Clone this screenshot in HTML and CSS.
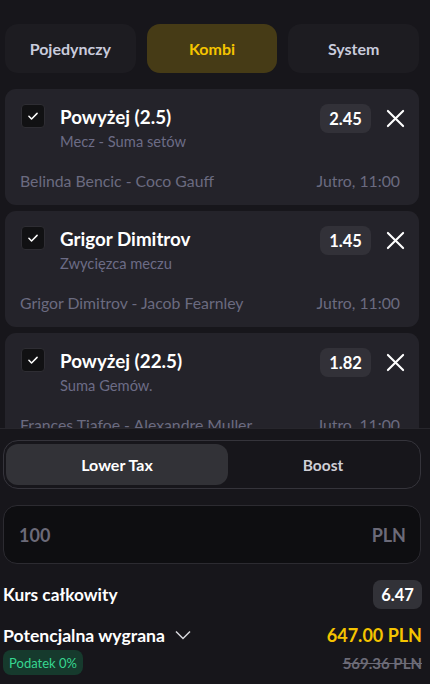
FILE: index.html
```html
<!DOCTYPE html>
<html lang="pl">
<head>
<meta charset="utf-8">
<link rel="stylesheet" href="styles.css">
</head>
<body>
<div class="app">
  <div class="tabs">
    <div class="tab">Pojedynczy</div>
    <div class="tab active">Kombi</div>
    <div class="tab">System</div>
  </div>

  <div class="slips">
    <div class="card">
      <div class="top">
        <div class="check"><svg viewBox="0 0 24 24" width="14" height="14"><path d="M5 12.5l4.5 4.5L19 7.5" fill="none" stroke="#fff" stroke-width="2.6" stroke-linecap="round" stroke-linejoin="round"/></svg></div>
        <div class="info">
          <div class="title">Powyżej (2.5)</div>
          <div class="sub">Mecz - Suma setów</div>
        </div>
        <div class="odds">2.45</div>
        <div class="close"><svg viewBox="0 0 20 20" width="19" height="19"><path d="M2 2L18 18M18 2L2 18" stroke="#fff" stroke-width="2.2" stroke-linecap="round"/></svg></div>
      </div>
      <div class="foot"><span>Belinda Bencic - Coco Gauff</span><span>Jutro, 11:00</span></div>
    </div>

    <div class="card">
      <div class="top">
        <div class="check"><svg viewBox="0 0 24 24" width="14" height="14"><path d="M5 12.5l4.5 4.5L19 7.5" fill="none" stroke="#fff" stroke-width="2.6" stroke-linecap="round" stroke-linejoin="round"/></svg></div>
        <div class="info">
          <div class="title">Grigor Dimitrov</div>
          <div class="sub">Zwycięzca meczu</div>
        </div>
        <div class="odds">1.45</div>
        <div class="close"><svg viewBox="0 0 20 20" width="19" height="19"><path d="M2 2L18 18M18 2L2 18" stroke="#fff" stroke-width="2.2" stroke-linecap="round"/></svg></div>
      </div>
      <div class="foot"><span>Grigor Dimitrov - Jacob Fearnley</span><span>Jutro, 11:00</span></div>
    </div>

    <div class="card">
      <div class="top">
        <div class="check"><svg viewBox="0 0 24 24" width="14" height="14"><path d="M5 12.5l4.5 4.5L19 7.5" fill="none" stroke="#fff" stroke-width="2.6" stroke-linecap="round" stroke-linejoin="round"/></svg></div>
        <div class="info">
          <div class="title">Powyżej (22.5)</div>
          <div class="sub">Suma Gemów.</div>
        </div>
        <div class="odds">1.82</div>
        <div class="close"><svg viewBox="0 0 20 20" width="19" height="19"><path d="M2 2L18 18M18 2L2 18" stroke="#fff" stroke-width="2.2" stroke-linecap="round"/></svg></div>
      </div>
      <div class="foot"><span>Frances Tiafoe - Alexandre Muller</span><span>Jutro, 11:00</span></div>
    </div>
  </div>

  <div class="panel">
    <div class="toggle">
      <div class="seg active">Lower Tax</div>
      <div class="seg">Boost</div>
    </div>
    <div class="stake">
      <span class="amount">100</span>
      <span class="cur">PLN</span>
    </div>
    <div class="row total">
      <span class="label">Kurs całkowity</span>
      <span class="badge">6.47</span>
    </div>
    <div class="row win">
      <span class="label">Potencjalna wygrana <svg class="chev" viewBox="0 0 16 10" width="16" height="10"><path d="M1 1.5l7 7 7-7" fill="none" stroke="#d8d8de" stroke-width="1.5"/></svg></span>
      <span class="prize">647.00 PLN</span>
    </div>
    <div class="row tax">
      <span class="tag">Podatek 0%</span>
      <span class="old">569.36 PLN</span>
    </div>
  </div>
</div>
</body>
</html>
```

FILE: styles.css
```css
* { box-sizing: border-box; }
html, body { margin: 0; padding: 0; }
body {
  background: #17161b;
  font-family: Lato, "Noto Sans", sans-serif;
  color: #fff;
}
.app {
  width: 430px;
  height: 684px;
  display: flex;
  flex-direction: column;
  overflow: hidden;
}
.tabs {
  display: grid;
  grid-template-columns: 1fr 1fr 1fr;
  gap: 11px;
  padding: 24px 11px 0 5px;
}
.tab {
  height: 49px;
  border-radius: 13px;
  background: #1d1c21;
  color: #c9cbdc;
  font-weight: 700;
  font-size: 16px;
  display: flex;
  align-items: center;
  justify-content: center;
}
.tab.active {
  background: #463b16;
  color: #f5c400;
}
.slips {
  margin-top: 16px;
  height: 339px;
  overflow: hidden;
  padding: 0 11px 0 5px;
  display: flex;
  flex-direction: column;
  gap: 6px;
  flex-shrink: 0;
}
.card {
  flex-shrink: 0;
  height: 116px;
  background: #24232a;
  border-radius: 11px;
  padding: 15px 15px 14px 15px;
  display: flex;
  flex-direction: column;
}
.top {
  display: flex;
  align-items: flex-start;
}
.check {
  width: 24px;
  height: 24px;
  margin-left: 1px;
  border-radius: 4px;
  background: #111113;
  border: 1px solid #2e2d33;
  display: flex;
  align-items: center;
  justify-content: center;
  flex-shrink: 0;
}
.info {
  flex: 1;
  margin-left: 15px;
  margin-top: 2px;
}
.title {
  font-size: 18.8px;
  line-height: 22px;
  font-weight: 700;
  color: #fff;
}
.sub {
  margin-top: 3px;
  font-size: 14.7px;
  line-height: 20px;
  color: #6c6c86;
}
.odds {
  height: 29px;
  min-width: 51px;
  padding: 0 8px;
  border-radius: 8px;
  background: #323138;
  font-size: 16.5px;
  font-weight: 700;
  display: flex;
  align-items: center;
  justify-content: center;
}
.close {
  width: 24px;
  height: 29px;
  margin-left: 12px;
  margin-right: -3px;
  display: flex;
  align-items: center;
  justify-content: center;
}
.foot {
  margin-top: auto;
  display: flex;
  justify-content: space-between;
  padding-right: 4px;
  font-size: 15.8px;
  line-height: 20px;
  color: #6b6b80;
}
.panel {
  flex: 1;
  border-top: 1px solid #27262c;
  background: #17161b;
  padding: 11px 9px 0 3px;
  display: flex;
  flex-direction: column;
}
.toggle {
  height: 49px;
  border: 1px solid #35343b;
  border-radius: 15px;
  padding: 3px 2px;
  display: grid;
  grid-template-columns: 222px 1fr;
}
.seg {
  border-radius: 12px;
  display: flex;
  align-items: center;
  justify-content: center;
  font-size: 15.5px;
  font-weight: 700;
  color: #cfcfd6;
}
.seg.active {
  background: #323237;
  color: #fff;
  font-size: 16px;
}
.stake {
  margin-top: 16px;
  height: 59px;
  border-radius: 14px;
  border: 1px solid #2c2b31;
  background: #0e0e11;
  display: flex;
  align-items: center;
  justify-content: space-between;
  padding: 0 14px 0 15px;
  font-size: 18px;
  font-weight: 700;
  color: #6b6a78;
}
.row {
  display: flex;
  align-items: center;
  justify-content: space-between;
}
.total {
  margin-top: 16px;
  margin-right: -1px;
}
.label {
  font-size: 17.3px;
  font-weight: 700;
  display: flex;
  align-items: center;
}
.win .label { font-size: 17.6px; }
.chev { margin-left: 10px; }
.badge {
  height: 29px;
  width: 49px;
  border-radius: 8px;
  background: #323238;
  font-size: 16.5px;
  font-weight: 700;
  display: flex;
  align-items: center;
  justify-content: center;
}
.win {
  margin-top: 14px;
  height: 24px;
  margin-right: -1px;
}
.prize {
  color: #f5c400;
  font-size: 18px;
  font-weight: 700;
}
.tax {
  margin-top: 3px;
  margin-right: -1px;
}
.tag {
  height: 25px;
  width: 80px;
  border-radius: 8px;
  background: #163a2d;
  color: #36d690;
  font-size: 13px;
  display: flex;
  align-items: center;
  justify-content: center;
}
.old {
  color: #6c6b77;
  font-size: 15px;
  font-weight: 700;
  text-decoration: line-through;
}
```
